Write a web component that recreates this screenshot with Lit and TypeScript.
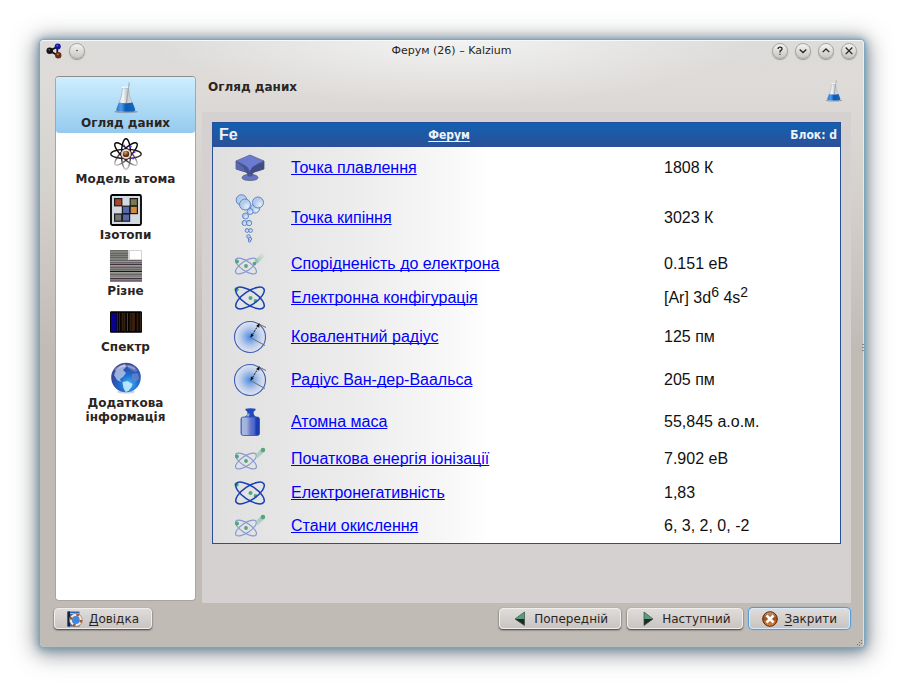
import { LitElement, html, css, svg, nothing, type TemplateResult } from "lit";
import { customElement, state } from "lit/decorators.js";
import { classMap } from "lit/directives/class-map.js";

const flask = (cls: string) => html`
  <svg class=${cls} viewBox="0 0 32 32" aria-hidden="true">
    <defs>
      <linearGradient id="glass" x1="0" x2="1">
        <stop offset="0" stop-color="#c3cad0" />
        <stop offset="0.35" stop-color="#f6f7f8" />
        <stop offset="0.55" stop-color="#c6ccd2" />
        <stop offset="1" stop-color="#dfe4e8" />
      </linearGradient>
      <linearGradient id="liquid" x1="0" x2="1">
        <stop offset="0" stop-color="#2a78cc" />
        <stop offset="0.25" stop-color="#4f9be4" />
        <stop offset="0.5" stop-color="#0a5cb8" />
        <stop offset="1" stop-color="#1a66bc" />
      </linearGradient>
    </defs>
    <ellipse cx="16" cy="29.8" rx="12" ry="1.5" fill="#5a6b86" opacity="0.55" />
    <path d="M12.500 6h6l1 8 5.500 13q.8 2.600-2 3H8.500q-2.800-.4-2-3L11.500 14z" fill="url(#glass)" stroke="#a4b2be" stroke-width="0.700" />
    <path d="M8.800 20.500q7 1.500 13.700 0L25 27q.6 2.400-2 2.800H8.500q-2.600-.4-2-2.800z" fill="url(#liquid)" />
    <path d="M12 5.600q3.500-1.200 7 0" fill="none" stroke="#fff" stroke-width="1.200" />
    <path d="M18.700.5h1.200L17 21h-1.300z" fill="#8f989e" opacity="0.7" />
  </svg>
`;

const atom = html`
  <svg class="icon" viewBox="0 0 32 32" aria-hidden="true">
    <defs>
      <linearGradient id="orbit" gradientUnits="userSpaceOnUse" x1="8" y1="4" x2="14" y2="32">
        <stop offset="0" stop-color="#000" />
        <stop offset="0.6" stop-color="#2b2327" />
        <stop offset="1" stop-color="#cfcbcd" />
      </linearGradient>
      <radialGradient id="core" cx="0.4" cy="0.3">
        <stop offset="0" stop-color="#e0a070" />
        <stop offset="1" stop-color="#6b2a08" />
      </radialGradient>
    </defs>
    <g fill="none" stroke="url(#orbit)" stroke-width="1.400">
      <ellipse cx="16" cy="16" rx="4.600" ry="15.200" />
      <ellipse cx="16" cy="16" rx="4.600" ry="15.200" transform="rotate(45 16 16)" />
      <ellipse cx="16" cy="16" rx="4.600" ry="15.200" transform="rotate(-45 16 16)" />
      <ellipse cx="16" cy="16" rx="15.200" ry="4.600" />
    </g>
    <circle cx="16" cy="16" r="5" fill="#fff" opacity="0.75" />
    <circle cx="16" cy="16" r="3.300" fill="url(#core)" />
    <g fill="#7a2cf0">
      <circle cx="14" cy="7.500" r="1" /><circle cx="20.800" cy="8.500" r="1" />
      <circle cx="24.500" cy="14" r="1" /><circle cx="23.200" cy="20.500" r="1" />
    </g>
  </svg>
`;

const isotopes = html`
  <svg class="icon" viewBox="0 0 32 32" aria-hidden="true">
    <rect x="1" y="1" width="30" height="30" rx="1.500" fill="#d3d9e0" stroke="#000" stroke-width="1.800" />
    <g stroke="#1c1c1c" stroke-width="1.200">
      <rect x="4.600" y="4.600" width="7.200" height="7.200" fill="#a6462c" />
      <rect x="20.200" y="4.600" width="7.200" height="7.200" fill="#7c7a4c" />
      <rect x="12.400" y="12.200" width="7.200" height="7.400" fill="#5468ac" />
      <rect x="20.200" y="12.200" width="7.200" height="7.400" fill="#d08a3c" />
      <rect x="4.600" y="20" width="7.200" height="7.200" fill="#757575" />
      <rect x="12.400" y="20" width="7.200" height="7.200" fill="#5468ac" />
    </g>
  </svg>
`;

const strips = html`
  <svg class="icon" viewBox="0 0 32 32" aria-hidden="true" shape-rendering="crispEdges">
    <rect width="32" height="32" fill="#82827f" />
    <path d="M0 .5h32M0 19.500h32M0 24.500h32M0 30.500h32" stroke="#6a6a68" />
    <path d="M0 3.500h19M0 5.500h19M0 7.500h19M0 10.500h32M0 12.500h32M0 17.500h32" stroke="#636361" />
    <path d="M0 14.500h32M0 28.500h32" stroke="#4a2c44" />
    <path d="M0 21.500h32" stroke="#15151c" />
    <path d="M0 15.500h32M0 22.500h32M0 27.500h32M0 11.500h32" stroke="#9a9a96" />
    <rect x="18" width="14" height="10" fill="#d4d4d4" />
    <rect x="20" y="1" width="11" height="8" fill="#fff" />
  </svg>
`;

const spectrum = html`
  <svg class="icon" viewBox="0 0 32 32" aria-hidden="true">
    <rect y="5" width="32" height="22" rx="1.500" fill="#060303" />
    <rect x="1" y="7" width="5.500" height="18" fill="#0a0090" />
    <path d="M7.500 7v18M9.500 7v18" stroke="#31323a" stroke-width="0.800" />
    <path d="M12.500 7v18M14.500 7v18M20.500 7v18M22.500 7v18M27.500 7v18M30.500 7v18" stroke="#35200f" stroke-width="1.600" />
    <path d="M17.500 7v18M24 7v18" stroke="#6c3414" />
    <path d="M.5 5.500h31M.5 26.500h31" stroke="#777" opacity="0.6" stroke-width="0.800" />
  </svg>
`;

const globe = html`
  <svg class="icon" viewBox="0 0 32 32" aria-hidden="true">
    <defs>
      <radialGradient id="ocean" cx="0.6" cy="0.72" r="0.75">
        <stop offset="0" stop-color="#4ab4f6" />
        <stop offset="0.4" stop-color="#1d6fd2" />
        <stop offset="0.8" stop-color="#34479c" />
        <stop offset="1" stop-color="#4b5096" />
      </radialGradient>
    </defs>
    <ellipse cx="16" cy="30" rx="9" ry="1.600" fill="#8a97b4" opacity="0.4" />
    <circle cx="16" cy="15.500" r="14.800" fill="url(#ocean)" />
    <path d="M6 8l4-4 5-2 1 3-3 3 3 3-3 4-3 2 1 3-4-2-3-5z" fill="#b9c9e8" opacity="0.8" />
    <path d="M18 3l6 1 4 5-3 1-4-2-3-2zM22 12l6-1 1 6-4 3-3-3z" fill="#7187cc" opacity="0.7" />
    <path d="M12.500 20l5-1 5 3-1 3-3 4-3 1-2-4z" fill="#c4ecfc" opacity="0.9" />
    <path d="M5 8q9-8 20-1" fill="none" stroke="#fff" opacity="0.3" stroke-width="2" />
  </svg>
`;

const anvil = html`
  <svg class="prop-30" viewBox="0 0 30 28" aria-hidden="true">
    <path d="M7 23.500q0-2.300 6-3.200h4q6 .9 6 3.200 0 3-8 3t-8-3z" fill="#6574c4" stroke="#555b72" stroke-width="0.700" />
    <path d="M12 18h6l-1 4h-4z" fill="#4c5a9e" stroke="#444b66" stroke-width="0.500" />
    <path d="M1 7v8l6 2q5 1 6 2.500h4q1-1.500 6-2.500l6-2V7l-14 7z" fill="#46549a" stroke="#3e4662" stroke-width="0.700" />
    <path d="M15 1L1 7l7 3q5 2.500 7 8 1.500-5.500 7-8l7-3z" fill="#6c7bd2" stroke="#545c88" stroke-width="0.700" />
    <path d="M1 8v7l9 3Q9 12 1 8z" fill="#5767ae" />
    <path d="M15 18l3 .5q4-2 11-3.500V8q-12 3-14 10z" fill="#3f4c88" />
  </svg>
`;

const bubbles = html`
  <svg class="prop-50" viewBox="0 0 30 50" aria-hidden="true">
    <defs>
      <radialGradient id="bubble" cx="0.7" cy="0.7">
        <stop offset="0" stop-color="#e4f0fa" />
        <stop offset="1" stop-color="#b2cbe8" />
      </radialGradient>
    </defs>
    <g fill="url(#bubble)" stroke="#6286c8">
      <circle cx="6.500" cy="7" r="5.300" /><circle cx="20" cy="15.500" r="4.600" />
      <circle cx="15" cy="18.500" r="3" /><circle cx="10" cy="11.500" r="5.500" />
      <circle cx="23" cy="9.500" r="5.500" />
      <circle cx="10.500" cy="23" r="3" /><circle cx="9.500" cy="30" r="2.500" />
      <circle cx="14" cy="30" r="2.700" /><circle cx="12" cy="37.500" r="1.900" />
      <circle cx="15.500" cy="37.500" r="1.900" /><circle cx="13.500" cy="43.500" r="1.800" />
      <circle cx="15" cy="46" r="1.700" /><circle cx="14.500" cy="48" r="1.200" />
    </g>
  </svg>
`;

const electronShot = (faded: boolean) => html`
  <svg class="prop-32" viewBox="0 0 32 24" aria-hidden="true">
    <defs>
      <linearGradient id="trail" x1="0" y1="1" x2="1" y2="0">
        <stop offset="0" stop-color="#a9cdbf" stop-opacity="0.5" />
        <stop offset="1" stop-color="#8cc0ac" />
      </linearGradient>
      <linearGradient id="trail-out" x1="0" y1="1" x2="1" y2="0">
        <stop offset="0" stop-color="#84bda6" />
        <stop offset="1" stop-color="#b4d2c8" stop-opacity="0.1" />
      </linearGradient>
    </defs>
    <g fill="none" stroke="#8799d2" stroke-width="1.200">
      <ellipse cx="12" cy="14" rx="12.200" ry="4.800" transform="rotate(34 12 14)" />
      <ellipse cx="12" cy="14" rx="12.200" ry="4.800" transform="rotate(-34 12 14)" />
    </g>
    <path d="M20.500 8.500L28 1l3 3-7.500 7.500z" fill="url(#${faded ? "trail-out" : "trail"})" />
    <g fill="#52a67e">
      <circle cx="3" cy="9.500" r="2" /><circle cx="12" cy="14" r="1.900" />
      ${faded ? svg`<circle cx="20.500" cy="11.500" r="1.800" />` : svg`<circle cx="29" cy="3" r="2.200" />`}
    </g>
  </svg>
`;

const orbitals = html`
  <svg class="prop-32" viewBox="0 0 32 24" aria-hidden="true">
    <g fill="#52a67e">
      <circle cx="2.500" cy="3.500" r="2.200" /><circle cx="16.500" cy="12" r="2" />
      <circle cx="21.500" cy="15" r="1.900" />
    </g>
    <g fill="none" stroke="#1740b4" stroke-width="1.500">
      <ellipse cx="16" cy="12" rx="16.600" ry="6.800" transform="rotate(34 16 12)" />
      <ellipse cx="16" cy="12" rx="16.600" ry="6.800" transform="rotate(-34 16 12)" />
    </g>
  </svg>
`;

const radius = html`
  <svg class="prop-34" viewBox="0 0 34 34" aria-hidden="true">
    <defs>
      <radialGradient id="cloud">
        <stop offset="0" stop-color="#3f8fe6" />
        <stop offset="0.25" stop-color="#7ba6e6" />
        <stop offset="0.6" stop-color="#b9cbea" />
        <stop offset="1" stop-color="#e2e6ef" />
      </radialGradient>
    </defs>
    <circle cx="17" cy="17" r="15.500" fill="url(#cloud)" stroke="#3c5cb4" stroke-width="1.100" />
    <path d="M17.500 17.500l14.500 8M26 4l7 3.500" stroke="#6d6d6a" fill="none" />
    <path d="M18 17l7-11.500" stroke="#111" stroke-width="1" stroke-dasharray="2 1" />
    <path d="M26.500 3l-.3 4.800-3-1.800z" fill="#111" />
    <path d="M17.500 17.800l.5-4.300 2.800 1.700z" fill="#111" />
  </svg>
`;

const weight = html`
  <svg class="prop-30" viewBox="0 0 30 28" aria-hidden="true">
    <defs>
      <linearGradient id="steel" x1="0" x2="1">
        <stop offset="0" stop-color="#4a70c8" />
        <stop offset="0.08" stop-color="#a6badf" />
        <stop offset="0.3" stop-color="#9fb3dc" />
        <stop offset="0.5" stop-color="#6f78cc" />
        <stop offset="0.75" stop-color="#3f62cc" />
        <stop offset="0.8" stop-color="#1c3fb6" />
        <stop offset="1" stop-color="#1b3aa6" />
      </linearGradient>
    </defs>
    <path d="M10.500.8q5-1 10 0v1.400q-2 .8-2 2.800t3 4.300h-12q3-2.300 3-4.300t-2-2.800z" fill="#2148bc" />
    <path d="M12.300 5.500h2.500l-.8 3.300h-3.500q1.800-1.500 1.800-3.300z" fill="#8ea4dc" />
    <rect x="6" y="9" width="18.500" height="18.500" rx="2.200" fill="url(#steel)" stroke="#2a4fb4" stroke-width="0.800" />
  </svg>
`;

const molecule = html`
  <svg class="molecule" viewBox="0 0 17 17" aria-hidden="true">
    <path d="M4 8.200L12 4v9zM12 3.500v9" fill="none" stroke="#111" stroke-width="1.800" />
    <circle cx="4" cy="8.200" r="3.500" fill="#141414" />
    <circle cx="12.500" cy="3.800" r="3.200" fill="#1414a0" />
    <circle cx="13" cy="13" r="3.400" fill="#6a2c12" />
    <circle cx="12" cy="2.800" r="1" fill="#6464e0" /><circle cx="12.500" cy="12" r="1.100" fill="#b4745a" />
    <circle cx="3.500" cy="7.200" r="0.900" fill="#666" />
  </svg>
`;

const glyphs: Record<string, TemplateResult> = {
  menu: html`<svg class="glyph" viewBox="0 0 16 16"><circle cx="8" cy="7.500" r="0.800" fill="#222" /></svg>`,
  help: html`<svg class="glyph" viewBox="0 0 16 16"><path class="line" d="M5.800 5.800q0-2.300 2.300-2.300t2.200 2q0 1-1.200 1.800t-1.100 1.900v.4M8 11.200v1.200" /></svg>`,
  down: html`<svg class="glyph" viewBox="0 0 16 16"><path class="line" d="M4.200 6.200L8 9.800l3.800-3.600" /></svg>`,
  up: html`<svg class="glyph" viewBox="0 0 16 16"><path class="line" d="M4.200 9.300L8 5.700l3.800 3.600" /></svg>`,
  close: html`<svg class="glyph" viewBox="0 0 16 16"><path class="line" d="M4.200 4l7.600 7.600M11.800 4l-7.600 7.600" /></svg>`,
};

const manual = html`
  <svg class="small" viewBox="0 0 16 16" aria-hidden="true">
    <rect x="0.500" y="0.500" width="12" height="15" fill="#2c62b4" />
    <rect x="0.500" y="0.500" width="2.500" height="15" fill="#16243c" />
    <path d="M3 2.500h9.500" stroke="#8ec0f0" />
    <circle cx="8.800" cy="9" r="5.200" fill="#3f86dc" stroke="#f1e6da" stroke-width="2.600" />
    <circle cx="8.800" cy="9" r="5.200" fill="none" stroke="#a85a26" stroke-width="2.600" stroke-dasharray="2.600 5.560" />
    <circle cx="8.800" cy="9" r="6.500" fill="none" stroke="#7c5a44" stroke-width="0.500" />
  </svg>
`;

const previous = html`
  <svg class="small" viewBox="0 0 16 16" aria-hidden="true">
    <path d="M12.500 1v7H3z" fill="#56a082" /><path d="M3 8h9.500v6.500z" fill="#1f2a25" />
    <path d="M12.500 1v13.500L3 8z" fill="none" stroke="#3b4a43" stroke-width="0.700" />
  </svg>
`;

const next = html`
  <svg class="small" viewBox="0 0 16 16" aria-hidden="true">
    <path d="M4 1v7h9z" fill="#56a082" /><path d="M13 8H4v6.500z" fill="#1f2a25" />
    <path d="M4 1v13.500L13 8z" fill="none" stroke="#3b4a43" stroke-width="0.700" />
  </svg>
`;

const cancel = html`
  <svg class="small" viewBox="0 0 16 16" aria-hidden="true">
    <defs>
      <linearGradient id="ember" x1="0" y1="0" x2="0" y2="1">
        <stop offset="0" stop-color="#c9a488" /><stop offset="0.45" stop-color="#a04c14" />
        <stop offset="1" stop-color="#e08a3c" />
      </linearGradient>
    </defs>
    <circle cx="8" cy="8" r="7.300" fill="url(#ember)" stroke="#5c240a" />
    <path d="M4.500 4.500l7 7M11.500 4.500l-7 7" stroke="#fff" stroke-width="2.600" />
  </svg>
`;

interface Page { name: string; icon: TemplateResult }
interface Property { name: string; value: TemplateResult | string; icon: TemplateResult; size: string }

const pages: Page[] = [
  { name: "Огляд даних", icon: flask("icon") },
  { name: "Модель атома", icon: atom },
  { name: "Ізотопи", icon: isotopes },
  { name: "Різне", icon: strips },
  { name: "Спектр", icon: spectrum },
  { name: "Додаткова інформація", icon: globe },
];

const properties: Property[] = [
  { name: "Точка плавлення", value: "1808 К", icon: anvil, size: "h40" },
  { name: "Точка кипіння", value: "3023 К", icon: bubbles, size: "h60" },
  { name: "Спорідненість до електрона", value: "0.151 еВ", icon: electronShot(true), size: "h32" },
  { name: "Електронна конфігурація", value: html`[Ar] 3d<sup>6</sup> 4s<sup>2</sup>`, icon: orbitals, size: "h36" },
  { name: "Ковалентний радіус", value: "125 пм", icon: radius, size: "h42" },
  { name: "Радіус Ван-дер-Ваальса", value: "205 пм", icon: radius, size: "h44" },
  { name: "Атомна маса", value: "55,845 а.о.м.", icon: weight, size: "h40" },
  { name: "Початкова енергія іонізації", value: "7.902 еВ", icon: electronShot(false), size: "h34" },
  { name: "Електронегативність", value: "1,83", icon: orbitals, size: "h34" },
  { name: "Стани окислення", value: "6, 3, 2, 0, -2", icon: electronShot(false), size: "h32" },
];

@customElement("app-root")
export class AppRoot extends LitElement {
  @state() private page = 0;

  static styles = css`
    :host {
      display: flex;
      box-sizing: border-box;
      min-height: 100vh;
      padding: 40px;
      background: #fff;
      color: #2a2523;
      font: 12px/14px "DejaVu Sans", sans-serif;
    }
    *, *::before, *::after { box-sizing: border-box; }
    svg { display: block; flex: none; }
    button { font: inherit; color: inherit; }
    .window {
      position: relative;
      flex: 1;
      min-width: 0;
      display: flex;
      flex-direction: column;
      border-radius: 4px;
      background:
        radial-gradient(ellipse 300px 64px at 50% 0, rgba(245, 245, 245, 0.9), rgba(235, 235, 235, 0)),
        linear-gradient(#dcdcda 0, #dedad7 50px, #d5d1cd 150px, #c1bbb6 310px);
      box-shadow:
        inset 0 1px 0 #f8f8f8,
        inset -1px 0 0 rgba(255, 255, 255, 0.5),
        0 0 2px 1px #74a9c6,
        0 1px 8px 2px rgba(90, 130, 155, 0.7),
        0 3px 22px 5px rgba(70, 75, 80, 0.55);
    }
    .titlebar {
      display: grid;
      grid-template-columns: 1fr auto 1fr;
      align-items: center;
      height: 22px;
      padding: 0 7px 0 6px;
    }
    .title { margin: 0; font-size: 11px; line-height: 14px; font-weight: normal; }
    .controls { display: flex; align-items: center; gap: 7px; }
    .controls.end { justify-content: flex-end; }
    .molecule { width: 16px; height: 16px; }
    .round {
      width: 16px;
      height: 16px;
      padding: 0;
      border: 1px solid #aaa6a3;
      border-radius: 50%;
      background: linear-gradient(#f4f3f2, #c9c6c3);
      box-shadow: 0 1px 1px rgba(0, 0, 0, 0.3);
    }
    .glyph { width: 14px; height: 14px; }
    .line { fill: none; stroke: #2b2727; stroke-width: 1.5; }
    .content {
      flex: 1;
      display: grid;
      grid-template-columns: 141px minmax(0, 1fr);
      gap: 6px;
      padding: 14px 13px 0 15px;
    }
    .pages {
      margin-bottom: 2px;
      border: 1px solid #a9a5a1;
      border-top-color: #8f8c8a;
      border-radius: 4px;
      background: #fff;
      overflow: hidden;
    }
    .page {
      display: flex;
      flex-direction: column;
      align-items: center;
      gap: 2px;
      width: 100%;
      padding: 5px 20px 3px;
      border: 0;
      background: none;
      font-weight: bold;
      text-align: center;
    }
    .page.current { background: linear-gradient(#cdeefe, #95caee); border-radius: 3px; }
    .icon { width: 32px; height: 32px; }
    .label { white-space: nowrap; }
    .page:last-child .label { white-space: normal; }
    .main { display: flex; flex-direction: column; min-width: 0; }
    .heading {
      display: flex;
      justify-content: space-between;
      align-items: flex-start;
      height: 36px;
      padding: 4px 6px 0;
    }
    .heading-text { margin: 0; font-size: 12px; line-height: 14px; }
    .flask { width: 22px; height: 22px; }
    .panel { flex: 1; padding: 10px; background: #d5d1d0; }
    .data {
      width: 100%;
      table-layout: fixed;
      border-spacing: 0;
      border: 1px solid #26509a;
      background: linear-gradient(90deg, #dfdfdf, #ececec 22%, #f8f8f8 38%, #fff 44%);
      color: #111;
      font: 16px/20px "Liberation Sans", Arial, sans-serif;
    }
    .col-icon { width: 78px; }
    .col-name { width: 373px; }
    .data th, .data td { padding: 0; text-align: left; font-weight: normal; vertical-align: middle; }
    .data .head th {
      height: 24px;
      background: linear-gradient(#1161b2, #2c5097);
      background-attachment: scroll;
      color: #eef2f6;
      font-weight: bold;
    }
    .data .head .symbol { padding-left: 6px; }
    .data .head .element,
    .data .head .block { font: bold 12px/14px "DejaVu Sans Condensed", "DejaVu Sans", sans-serif; }
    .data .head .element { padding-right: 57px; text-align: center; }
    .data .head .block { padding-right: 3px; text-align: right; }
    .element-link { color: inherit; text-decoration-skip-ink: none; text-underline-offset: 2px; }
    .prop-link { color: #0000ff; text-decoration-skip-ink: none; }
    .body::before, .body::after { content: ""; display: table-row; height: 1px; }
    .h32 { height: 32px; }
    .h34 { height: 34px; }
    .h36 { height: 36px; }
    .h40 { height: 40px; }
    .h42 { height: 42px; }
    .h44 { height: 44px; }
    .h60 { height: 60px; }
    .data .pic svg { margin: 0 auto; }
    .pic { padding-right: 4px; }
    .prop-30 { width: 30px; height: 28px; }
    .prop-32 { width: 32px; height: 24px; }
    .prop-34 { width: 34px; height: 34px; }
    .prop-50 { width: 30px; height: 50px; }
    sup { font-size: 14px; line-height: 0; }
    .footer { display: flex; gap: 6px; padding: 5px 14px 18px; }
    .push {
      display: flex;
      align-items: center;
      gap: 6px;
      height: 21px;
      padding: 0 12px;
      border: 1px solid #f0eeec;
      border-radius: 4px;
      background: linear-gradient(#dfdcda, #c9c4c1);
      box-shadow: 0 1px 2px rgba(0, 0, 0, 0.7);
    }
    .push.first { margin-right: auto; }
    .push.default { border-color: #d9eafa; box-shadow: 0 0 1px 1px #3f9ce8; }
    .small { width: 16px; height: 16px; }
    .key { text-decoration: underline; text-underline-offset: 2px; }
    .side-grip, .corner-grip { position: absolute; }
    .side-grip { right: 0; top: 50%; width: 2px; height: 8px; background: repeating-linear-gradient(#8a8683 0 1px, transparent 1px 3px); }
    .corner-grip { right: 1px; bottom: 1px; width: 6px; height: 6px; }
  `;

  private roundButton(kind: string, label: string) {
    return html`<button class="round" aria-label=${label}>${glyphs[kind]}</button>`;
  }

  private pushButton(cls: string, icon: TemplateResult, text: string, key = "") {
    return html`
      <button class="push ${cls}">
        ${icon}<span>${key ? html`<span class="key">${key}</span>` : nothing}${text}</span>
      </button>
    `;
  }

  render() {
    return html`
      <div class="window">
        <header class="titlebar">
          <div class="controls">${molecule}${this.roundButton("menu", "Меню")}</div>
          <h1 class="title">Ферум (26) – Kalzium</h1>
          <div class="controls end">
            ${this.roundButton("help", "Довідка")}${this.roundButton("down", "Мінімізувати")}
            ${this.roundButton("up", "Максимізувати")}${this.roundButton("close", "Закрити")}
          </div>
        </header>
        <div class="content">
          <nav class="pages">
            ${pages.map((p, i) => html`
              <button
                class=${classMap({ page: true, current: i === this.page })}
                @click=${() => { this.page = i; }}
              >${p.icon}<span class="label">${p.name}</span></button>
            `)}
          </nav>
          <main class="main">
            <div class="heading">
              <h2 class="heading-text">${pages[this.page].name}</h2>
              ${flask("flask")}
            </div>
            <section class="panel">
              <table class="data">
                <colgroup><col class="col-icon" /><col class="col-name" /><col /></colgroup>
                <thead class="head">
                  <tr>
                    <th class="symbol">Fe</th>
                    <th class="element"><a class="element-link" href="#element">Ферум</a></th>
                    <th class="block">Блок: d</th>
                  </tr>
                </thead>
                <tbody class="body">
                  ${properties.map((p) => html`
                    <tr class=${p.size}>
                      <td><div class="pic">${p.icon}</div></td>
                      <th scope="row"><a class="prop-link" href="#property">${p.name}</a></th>
                      <td>${p.value}</td>
                    </tr>
                  `)}
                </tbody>
              </table>
            </section>
          </main>
        </div>
        <footer class="footer">
          ${this.pushButton("first", manual, "овідка", "Д")}
          ${this.pushButton("", previous, "Попередній")}
          ${this.pushButton("", next, "Наступний")}
          ${this.pushButton("default", cancel, "акрити", "З")}
        </footer>
        <div class="side-grip"></div>
        <svg class="corner-grip" viewBox="0 0 6 6" aria-hidden="true">
          <path d="M4 0h1v1h-1zM2 2h1v1h-1zM4 3h1v1h-1zM0 4h1v1h-1zM2 5h1v1h-1z" fill="#77736f" />
        </svg>
      </div>
    `;
  }
}
